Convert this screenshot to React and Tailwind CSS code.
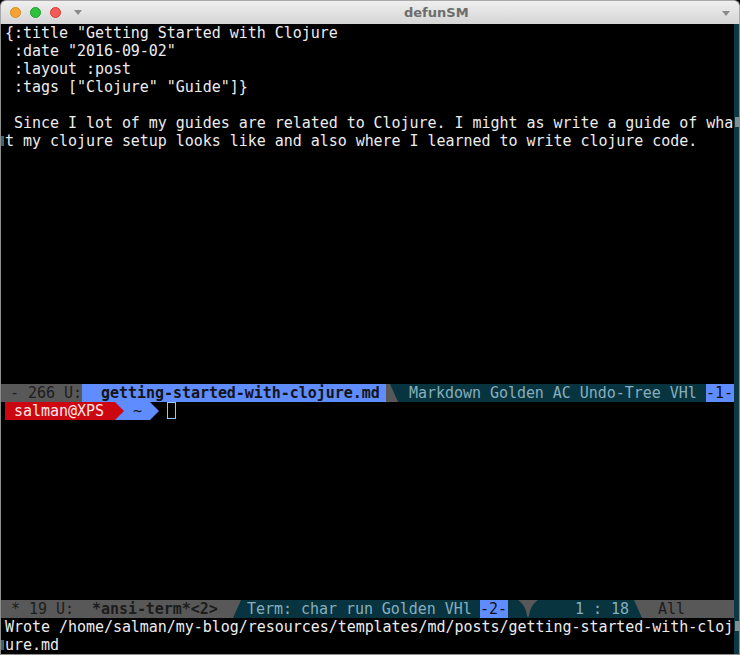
import React from 'react'

const mono = { fontFamily: '"DejaVu Sans Mono", "Liberation Mono", monospace', letterSpacing: '-0.04px' }

const bufferLines = [
  '{:title "Getting Started with Clojure',
  ' :date "2016-09-02"',
  ' :layout :post',
  ' :tags ["Clojure" "Guide"]}',
  '',
  ' Since I lot of my guides are related to Clojure. I might as write a guide of wha',
  't my clojure setup looks like and also where I learned to write clojure code.',
]

const Row = ({ children, wrapLeft }) => (
  <div className="relative h-[18px] leading-[18px] whitespace-pre pl-[4px] text-[#ececec] overflow-hidden">
    {wrapLeft && <span className="absolute left-0 top-[4px] w-[3px] h-[10px] bg-[#3d6470]" />}
    {children}
  </div>
)

const Slant = ({ from, to, flip }) => (
  <svg width="12" height="18" viewBox="0 0 12 18" className="block shrink-0">
    <rect width="12" height="18" fill={to} />
    <polygon points={flip ? '0,0 4,0 12,18 0,18' : '0,0 12,0 4,18 0,18'} fill={from} />
  </svg>
)

const Arrow = ({ from, to }) => (
  <svg width="10" height="18" viewBox="0 0 10 18" className="block shrink-0">
    <rect width="10" height="18" fill={to} />
    <polygon points="0,0 1,0 10,9 1,18 0,18" fill={from} />
  </svg>
)

export default function App() {
  return (
    <div className="w-[740px] h-[655px] flex flex-col bg-black overflow-hidden" style={mono}>
      {/* title bar */}
      <div className="relative h-[24px] shrink-0 flex items-center rounded-t-[6px] border border-b-0 border-[#a9a9a9] bg-gradient-to-b from-[#efefef] to-[#d5d5d5]">
        <div className="flex items-center gap-[9px] pl-[9px]">
          <span className="w-[11px] h-[11px] rounded-full bg-[#f6a431] border border-[#d98a1c]" />
          <span className="w-[11px] h-[11px] rounded-full bg-[#2fc13d] border border-[#1f9c2b]" />
          <span className="w-[11px] h-[11px] rounded-full bg-[#f35a56] border border-[#d33c38]" />
          <svg width="8" height="5" viewBox="0 0 8 5" className="ml-[4px]">
            <polygon points="0,0 8,0 4,5" fill="#8a8a8a" />
          </svg>
        </div>
        <div
          className="absolute left-[403px] top-[4px] text-[13px] font-bold text-[#6d6d6d] leading-[16px]"
          style={{ fontFamily: '"DejaVu Sans", "Noto Sans", sans-serif', letterSpacing: 0 }}
        >
          defunSM
        </div>
        <svg width="8" height="5" viewBox="0 0 8 5" className="absolute right-[9px] top-[10px]">
          <polygon points="0,0 8,0 4,5" fill="#8a8a8a" />
        </svg>
      </div>

      {/* body */}
      <div className="flex flex-1 border-x border-b border-[#8d8d8d] text-[15px]">
        <div className="flex flex-col w-[733px]">
          {/* upper window */}
          <div className="h-[360px]">
            {bufferLines.map((l, i) => (
              <Row key={i} wrapLeft={i === 6}>{l}</Row>
            ))}
          </div>

          {/* mode line 1 */}
          <div className="flex h-[18px] leading-[18px] whitespace-pre overflow-hidden">
            <div className="w-[81px] shrink-0 bg-[#585858] text-[#1c1c1c] pl-[9px]">- 266 U:</div>
            <div className="w-[304px] shrink-0 bg-[#5f8cff] text-[#141414] font-bold pl-[19px]">getting-started-with-clojure.md</div>
            <Slant from="#585858" to="#08343f" flip />
            <div className="flex-1 bg-[#08343f] text-[#86aebd] pl-[11px]">Markdown Golden AC Undo-Tree VHl</div>
            <div className="w-[28px] shrink-0 bg-[#5f8cff] text-[#101010]">-1-</div>
          </div>

          {/* terminal window */}
          <div className="h-[198px]">
            <div className="flex h-[18px] leading-[18px] whitespace-pre pl-[4px] items-stretch">
              <div className="bg-[#cc0710] text-[#ffe9e9] w-[109px] pl-[9px]">salman@XPS</div>
              <Arrow from="#cc0710" to="#5f8cff" />
              <div className="bg-[#5f8cff] text-[#161616] w-[25px] pl-[9px]">~</div>
              <Arrow from="#5f8cff" to="#000000" />
              <div className="w-[8px]" />
              <div className="w-[9px] h-[17px] border border-[#8fc8ff] box-border" />
            </div>
          </div>

          {/* mode line 2 */}
          <div className="flex h-[18px] leading-[18px] whitespace-pre overflow-hidden">
            <div className="w-[228px] shrink-0 bg-[#585858] text-[#1c1c1c] pl-[10px]">
              {'* 19 U:  '}
              <span className="font-bold">*ansi-term*&lt;2&gt;</span>
            </div>
            <Slant from="#585858" to="#08343f" />
            <div className="w-[239px] shrink-0 bg-[#08343f] text-[#86aebd] pl-[6px]">Term: char run Golden VHl</div>
            <div className="w-[28px] shrink-0 bg-[#5f8cff] text-[#101010]">-2-</div>
            <div className="w-[10px] shrink-0 bg-[#08343f]" />
            <svg width="20" height="18" viewBox="0 0 20 18" className="block shrink-0">
              <rect width="20" height="18" fill="#08343f" />
              <path d="M0,0 L20,0 C15,4 12,8 11,16 Q10,18 9,16 C8,8 5,4 0,0 Z" fill="#585858" />
            </svg>
            <div className="w-[92px] shrink-0 bg-[#08343f] text-[#86aebd] pl-[37px]">1 : 18</div>
            <Slant from="#08343f" to="#585858" flip />
            <div className="flex-1 bg-[#585858] text-[#1c1c1c] pl-[16px]">All</div>
          </div>

          {/* echo area */}
          <div className="flex flex-col">
            <Row>Wrote /home/salman/my-blog/resources/templates/md/posts/getting-started-with-cloj</Row>
            <Row wrapLeft>ure.md</Row>
          </div>
        </div>

        {/* right fringe */}
        <div className="flex-1 bg-[#0b3843] relative">
          <span className="absolute left-[1px] top-[93px] w-[4px] h-[10px] bg-[#7c8f95]" />
          <span className="absolute left-[1px] top-[597px] w-[4px] h-[10px] bg-[#7c8f95]" />
        </div>
      </div>
    </div>
  )
}
